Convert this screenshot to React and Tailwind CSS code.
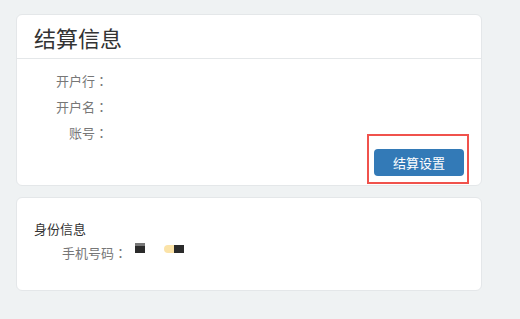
const Colon = () => (
  <span style={{ fontFamily: '"Noto Sans CJK TC", sans-serif' }}>：</span>
);

export default function App() {
  const rows = ['开户行', '开户名', '账号'];

  return (
    <div
      className="min-h-[319px] bg-[#eff2f3] pt-[14px] pl-[16px] [text-spacing-trim:space-all]"
      style={{ fontFamily: '"Microsoft YaHei", "Noto Sans CJK SC", sans-serif' }}
    >
      {/* 结算信息 */}
      <div className="w-[466px] rounded-md border border-[#e4e7e9] bg-white">
        <div className="flex h-[44px] items-center border-b border-[#e4e7e9] pl-[17px]">
          <h2 className="text-[22px] leading-none text-[#333]">结算信息</h2>
        </div>
        <div className="pt-[9px]">
          {rows.map((label) => (
            <div key={label} className="flex h-[26px] items-center">
              <span className="w-[91px] whitespace-nowrap text-right text-[13px] text-[#777]">
                {label}
                <Colon />
              </span>
            </div>
          ))}
        </div>
        <div className="relative mt-[3px] flex justify-end pb-[9px] pr-[17px]">
          <button className="h-[27px] w-[90px] rounded bg-[#337ab7] text-[13px] text-white">
            结算设置
          </button>
          <div className="absolute right-[12px] top-[-15px] h-[50px] w-[102px] border-2 border-[#f0524c]" />
        </div>
      </div>

      {/* 身份信息 */}
      <div className="mt-[11px] h-[94px] w-[466px] rounded-md border border-[#e4e7e9] bg-white pl-[17px] pt-[21px]">
        <div className="h-[20px] text-[13px] leading-[20px] text-[#333]">身份信息</div>
        <div className="mt-[4px] flex h-[20px] items-center">
          <span className="whitespace-nowrap pl-[28px] text-[13px] text-[#777]">
            手机号码
            <Colon />
          </span>
          <div className="ml-[8px] flex items-start gap-[19px] self-start">
            <div className="flex h-[10px] w-[10px] flex-col">
              <div className="h-[3px] bg-[#777]" />
              <div className="flex-1 bg-[#2b2b2b]" />
            </div>
            <div className="mt-[2px] flex h-[8px]">
              <div className="w-[10px] rounded-l-sm bg-[#fbe3a8]" />
              <div className="w-[10px] bg-[#2b2b2b]" />
            </div>
          </div>
        </div>
      </div>
    </div>
  );
}
